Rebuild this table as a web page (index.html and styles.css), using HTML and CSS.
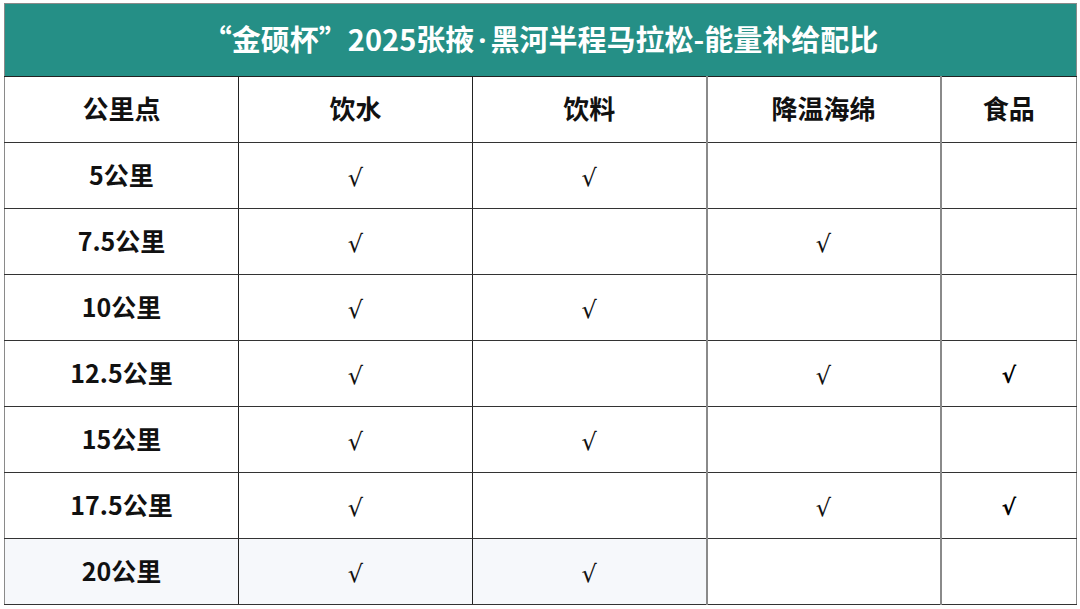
FILE: index.html
```html
<!DOCTYPE html>
<html lang="zh">
<head>
<meta charset="utf-8">
<link rel="stylesheet" href="styles.css">
</head>
<body>
<div class="page">
<table class="supply">
  <colgroup>
    <col class="c1"><col class="c2"><col class="c3"><col class="c4"><col class="c5">
  </colgroup>
  <thead>
    <tr class="title-row"><th colspan="5" class="title">“金硕杯”2025张掖<span class="dot">·</span>黑河半程马拉松-能量补给配比</th></tr>
    <tr class="head-row">
      <th>公里点</th><th>饮水</th><th>饮料</th><th class="g">降温海绵</th><th class="g">食品</th>
    </tr>
  </thead>
  <tbody>
    <tr><td class="km">5公里</td><td class="ck">√</td><td class="ck">√</td><td class="g"></td><td class="g"></td></tr>
    <tr><td class="km">7.5公里</td><td class="ck">√</td><td></td><td class="g ck">√</td><td class="g"></td></tr>
    <tr><td class="km">10公里</td><td class="ck">√</td><td class="ck">√</td><td class="g"></td><td class="g"></td></tr>
    <tr><td class="km">12.5公里</td><td class="ck">√</td><td></td><td class="g ck">√</td><td class="g ck2">√</td></tr>
    <tr><td class="km">15公里</td><td class="ck">√</td><td class="ck">√</td><td class="g"></td><td class="g"></td></tr>
    <tr><td class="km">17.5公里</td><td class="ck">√</td><td></td><td class="g ck">√</td><td class="g ck2">√</td></tr>
    <tr class="last"><td class="km shade">20公里</td><td class="ck shade">√</td><td class="ck shade">√</td><td class="g"></td><td class="g"></td></tr>
  </tbody>
</table>
</div>
</body>
</html>
```

FILE: styles.css
```css
html, body {
  margin: 0;
  padding: 0;
  background: #ffffff;
}
.page {
  padding: 3px 4px 0 4px;
}
.supply {
  width: 1072px;
  border-collapse: collapse;
  table-layout: fixed;
  font-family: "Noto Sans CJK SC", "Noto Sans", sans-serif;
  color: #111;
  border: 1.5px solid #8a8a8a;
}
.c1, .c2, .c3, .c4 { width: 234px; }
.c5 { width: 136px; }
.supply th, .supply td {
  text-align: center;
  vertical-align: middle;
  padding: 0 0 4px 0;
}
.supply .title {
  background: #258f86;
  color: #ffffff;
  height: 69px;
  padding: 0 0 3px 0;
  font-size: 29px;
  line-height: 36px;
  font-weight: 700;
  text-align: center;
  border-bottom: 1.5px solid #222;
}
.dot {
  font-family: "Noto Sans", sans-serif;
  padding: 0 4px;
}
.head-row th {
  height: 61px;
  font-size: 26px;
  font-weight: 700;
}
.supply tbody td {
  height: 61px;
}
.head-row th, .supply tbody td {
  border-left: 1px solid #222;
  border-right: 1px solid #222;
  border-bottom: 1.5px solid #333;
}
.supply .g {
  border-left: 2px solid #8a8a8a;
  border-right: 2px solid #8a8a8a;
}
.head-row th:first-child, .supply tbody td:first-child {
  border-left: 1.5px solid #8a8a8a;
}
.head-row th:last-child, .supply tbody td:last-child {
  border-right: 1.5px solid #8a8a8a;
}
.km {
  font-size: 25px;
  font-weight: 700;
}
.supply .ck, .supply .ck2 {
  padding: 4px 0 0 0;
  height: 61px;
}
.ck {
  font-family: "DejaVu Sans", sans-serif;
  font-size: 24px;
  font-weight: 400;
  color: #111;
}
.ck2 {
  font-family: "DejaVu Sans", sans-serif;
  font-size: 22px;
  font-weight: 700;
  font-style: italic;
  color: #000;
}
.shade {
  background: #f6f8fb;
}
.last td {
  border-bottom: 1.5px solid #8a8a8a;
}
```
